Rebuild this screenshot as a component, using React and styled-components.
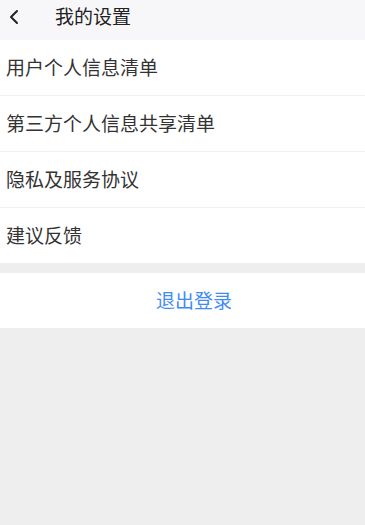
import { styled, createGlobalStyle } from "styled-components";

const GlobalStyle = createGlobalStyle`
  html, body {
    margin: 0;
    padding: 0;
    background: #eeeeee;
  }
  body {
    font-family: "Noto Sans CJK SC", "Noto Sans", sans-serif;
  }
  * {
    box-sizing: border-box;
  }
`;

const menuItems = [
  "用户个人信息清单",
  "第三方个人信息共享清单",
  "隐私及服务协议",
  "建议反馈",
];

const App = () => {
  return (
    <Page>
      <GlobalStyle />
      <Header>
        <BackButton aria-label="返回">
          <svg width="12" height="16" viewBox="0 0 12 16" fill="none">
            <path
              d="M9 2 L3 8 L9 14"
              stroke="#222"
              strokeWidth="2"
              strokeLinecap="round"
              strokeLinejoin="round"
            />
          </svg>
        </BackButton>
        <Title>我的设置</Title>
      </Header>
      <Menu>
        {menuItems.map((label, i) => (
          <MenuRow key={label} $last={i === menuItems.length - 1}>
            {label}
          </MenuRow>
        ))}
      </Menu>
      <LogoutButton>退出登录</LogoutButton>
    </Page>
  );
};

const Page = styled.div`
  min-height: 525px;
  background: #eeeeee;
`;

const Header = styled.header`
  height: 40px;
  background: #f7f7f9;
  display: flex;
  align-items: center;
  padding: 0 0 6px 6px;
`;

const BackButton = styled.button`
  border: none;
  background: none;
  padding: 0;
  width: 16px;
  height: 20px;
  display: flex;
  align-items: center;
  justify-content: center;
  cursor: pointer;
`;

const Title = styled.h1`
  margin: 0 0 3px 33px;
  font-size: 19px;
  font-weight: 400;
  color: #222;
  line-height: 1;
`;

const Menu = styled.ul`
  list-style: none;
  margin: 0;
  padding: 0;
  background: #fff;
`;

const MenuRow = styled.li`
  height: ${(p) => (p.$last ? "55px" : "56px")};
  display: flex;
  align-items: center;
  padding: 0 0 3px 6px;
  font-size: 19px;
  color: #333;
  border-bottom: ${(p) => (p.$last ? "none" : "1px solid #f0f0f0")};
`;

const LogoutButton = styled.button`
  display: flex;
  align-items: center;
  justify-content: center;
  width: 100%;
  height: 55px;
  margin-top: 10px;
  padding: 0 0 3px 23px;
  border: none;
  background: #fff;
  font-family: inherit;
  font-size: 19px;
  color: #3f8bf6;
  cursor: pointer;
`;

export default App;
